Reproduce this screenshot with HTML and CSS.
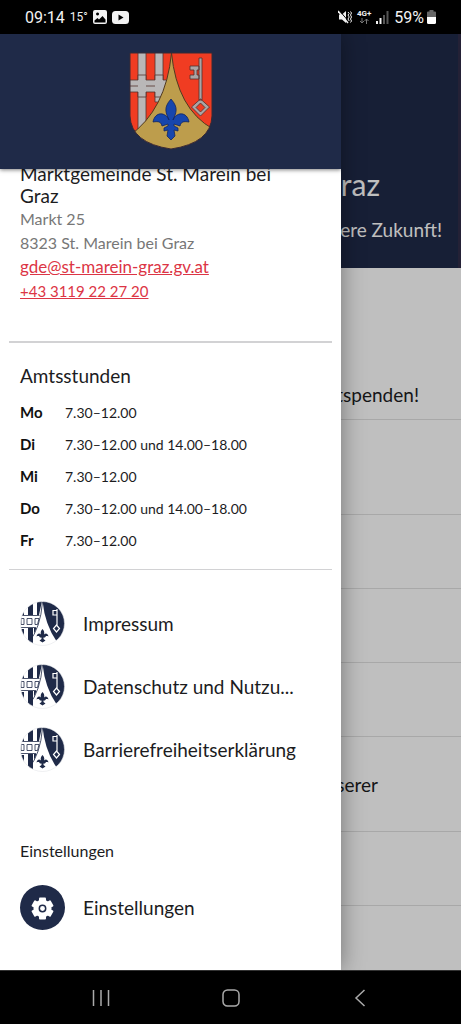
FILE: index.html
```html
<!DOCTYPE html>
<html lang="de">
<head>
    <meta charset="UTF-8">
    <meta name="viewport" content="width=device-width, initial-scale=1.0">
    <title>Marktgemeinde St. Marein bei Graz</title>
    <link rel="stylesheet" href="styles.css">
</head>
<body>
    <!-- Shared icon shapes -->
    <svg class="sprite" aria-hidden="true">
        <symbol id="crest-round" viewBox="0 0 45 45">
            <clipPath id="round"><circle cx="22.500" cy="22.500" r="22"/></clipPath>
            <g clip-path="url(#round)">
                <rect width="45" height="45" fill="#fff"/>
                <path d="M8 0h5v14H8zM17 0h5l-3 14h-2zM8 27h5v18H8zM0 28h4v17H0zM0 0h4v14H0z" fill="#1f2a48"/>
                <path d="M0 14.500h19.500M0 26.500h16M1 17.500h3v6H1zM7 17.500h5v6H7zM15 17.500h4l-1.500 6H15z" fill="none" stroke="#1f2a48" stroke-width=".8"/>
                <path d="M14 27h2.500Q14 34 9 41H8l6-8z" fill="#1f2a48"/>
                <path d="M22.500 0H45v30l-8 11Q25 24 22.500 0z" fill="#1f2a48"/>
                <path d="M22.500 1Q20.500 27 9 41" fill="none" stroke="#1f2a48" stroke-width=".8"/>
                <path d="M37 8v17M37 9.500h-4v4.500h4M36.500 24l3 3.500-3 3.500-3-3.500z" fill="none" stroke="#fff" stroke-width="1.200"/>
                <path d="M22.500 28c2.400 2.500 2 5 1 6.500 1-2.500 4-3 5 1-2-1-3-.3-3.500 1h-1.500v1.500l2 1.500-3 2-3-2 2-1.500v-1.500H20c-.500-1.300-1.500-2-3.500-1 1-4 4-3.500 5-1-1-1.500-1.400-4 1-6.500z" fill="#1f2a48"/>
            </g>
            <circle cx="22.500" cy="22.500" r="22" fill="none" stroke="#e4e5ea" stroke-width=".6"/>
        </symbol>
    </svg>

    <div class="screen">
        <div class="status-bar">
            <div class="status-left">
                <span class="clock">09:14</span>
                <span class="temp">15°</span>
                <svg width="14" height="14" viewBox="0 0 14 14"><path fill="#f2f2f2" fill-rule="evenodd" d="M2 0h10q2 0 2 2v10q0 2-2 2H2q-2 0-2-2V2q0-2 2-2zM1.500 10.500v2h11v-3L9.500 6 6 9.500 4.500 8zM4.500 2.500a1.500 1.500 0 1 0 .1 0z"/></svg>
                <svg width="17" height="13" viewBox="0 0 17 13"><rect width="17" height="13" rx="3.500" fill="#f2f2f2"/><path d="M6.500 3.500v6l5-3z" fill="#000"/></svg>
            </div>
            <div class="status-right">
                <svg width="14" height="14" viewBox="0 0 14 14"><path d="M1 4.500h3L8 1v12L4 9.500H1z" fill="#f2f2f2"/><path d="M1 0l10 12" stroke="#000"/><path d="M0 1l10 12" stroke="#f2f2f2" stroke-width="1.500"/><path d="M10 2l1.200 1.500L10 5l1.200 2L10 9l1.200 2M12.500 1.500L13.500 3l-1 2 1 2-1 2 1 2-1 1.500" stroke="#f2f2f2" fill="none"/></svg>
                <span class="network">4G+
                    <svg width="10" height="6" viewBox="0 0 10 6"><path d="M3 0v5M1 3l2 2 2-2M7.500 6V1M5.500 3l2-2 2 2" fill="none" stroke="#777"/></svg>
                </span>
                <svg width="13" height="13" viewBox="0 0 13 13"><path d="M0 10h2v3H0zM3.500 7h2v6h-2z" fill="#f2f2f2"/><path d="M7 4h2v9H7zM10.500 0h2v13h-2z" fill="#555"/></svg>
                <span class="percent">59%</span>
                <svg width="9" height="14" viewBox="0 0 9 14"><path d="M2.500 0h4v1.500H8q1 0 1 1V7H0V2.500q0-1 1-1h1.500z" fill="#666"/><path d="M0 7h9v5.500q0 1.500-1.500 1.500h-6Q0 14 0 12.500z" fill="#fff"/></svg>
            </div>
        </div>

        <div class="app">
            <main class="page">
                <header class="page-header">
                    <h1>Graz</h1>
                    <p>unsere Zukunft!</p>
                </header>
                <ul class="news">
                    <li class="news-first">Blutspenden!</li>
                    <li class="news-tall"></li>
                    <li></li>
                    <li></li>
                    <li></li>
                    <li class="news-tall news-short">unserer</li>
                    <li></li>
                    <li></li>
                </ul>
            </main>
            <div class="backdrop"></div>

            <aside class="drawer">
                <div class="drawer-header">
                    <svg class="crest" width="84" height="98" viewBox="0 0 84 98" role="img" aria-label="Wappen">
                        <clipPath id="shield"><path d="M1 1h82v63Q82 91 42 97 2 91 1 64z"/></clipPath>
                        <g clip-path="url(#shield)">
                            <rect width="84" height="98" fill="#f03c22"/>
                            <g fill="#b9b7b8" stroke="#53332f" stroke-width=".8">
                                <path d="M9 0h8v98H9zM26 0h8v50h-8z"/>
                                <path d="M0 28h9v-5h8v5h9v-5h8v5h6v12h-6v5h-8v-5h-9v5H9v-5H0z"/>
                                <path d="M0 34h9M17 34h9"/>
                            </g>
                            <path d="M42.500 1Q48 57 84 77v21H0V84Q37 58 42.500 1z" fill="#bd9d4c" stroke="#513a20"/>
                            <path d="M70 6h3v42h-3zM70 14h-9v4h4v5h-4v4h9v-4h-2v-5h2zM71.500 47l9 8-9 9-9-9zM71.500 51l-4.500 4.500 4.500 4.500 4.500-4.500z" fill="#aaa5a5" fill-rule="evenodd" stroke="#51302d" stroke-width=".8"/>
                            <path d="M42 47c-8 9-5 14-2 21-3-8-14-9-16 2 6-1 8 0 9 4l6-2v2l-4 2v3l4-1-1 6 4 4 4-4-1-6 4 1v-3l-4-2v-2l6 2c1-4 3-5 9-4-2-11-13-10-16-2 3-7 6-12-2-21z" fill="#1746ad" stroke="#14265e" stroke-width=".8"/>
                        </g>
                        <path d="M1 1h82v63Q82 91 42 97 2 91 1 64z" fill="none" stroke="#382b35"/>
                    </svg>
                </div>

                <div class="drawer-body">
                    <address class="contact">
                        <h2>Marktgemeinde St. Marein bei Graz</h2>
                        <p>Markt 25</p>
                        <p>8323 St. Marein bei Graz</p>
                        <p><a class="mail" href="mailto:gde@st-marein-graz.gv.at">gde@st-marein-graz.gv.at</a></p>
                        <p><a class="phone" href="tel:+433119222720">+43 3119 22 27 20</a></p>
                    </address>

                    <section class="hours">
                        <h2>Amtsstunden</h2>
                        <table>
                            <tr><th scope="row">Mo</th><td>7.30–12.00</td></tr>
                            <tr><th scope="row">Di</th><td>7.30–12.00 und 14.00–18.00</td></tr>
                            <tr><th scope="row">Mi</th><td>7.30–12.00</td></tr>
                            <tr><th scope="row">Do</th><td>7.30–12.00 und 14.00–18.00</td></tr>
                            <tr><th scope="row">Fr</th><td>7.30–12.00</td></tr>
                        </table>
                    </section>

                    <nav class="menu">
                        <a href="#impressum"><svg class="menu-icon"><use href="#crest-round"/></svg><span>Impressum</span></a>
                        <a href="#datenschutz"><svg class="menu-icon"><use href="#crest-round"/></svg><span>Datenschutz und Nutzu...</span></a>
                        <a href="#barrierefreiheit"><svg class="menu-icon"><use href="#crest-round"/></svg><span>Barrierefreiheitserklärung</span></a>
                    </nav>

                    <h3 class="menu-title">Einstellungen</h3>
                    <nav class="menu menu-settings">
                        <a href="#einstellungen">
                            <svg class="menu-icon" viewBox="0 0 45 45">
                                <circle cx="22.500" cy="22.500" r="22.500" fill="#1f2a48"/>
                                <g fill="#fff">
                                    <circle cx="22.500" cy="23.500" r="9"/>
                                    <rect x="19" y="12.500" width="7" height="22" rx="1"/>
                                    <rect x="19" y="12.500" width="7" height="22" rx="1" transform="rotate(60 22.500 23.500)"/>
                                    <rect x="19" y="12.500" width="7" height="22" rx="1" transform="rotate(120 22.500 23.500)"/>
                                </g>
                                <circle cx="22.500" cy="23.500" r="3.200" fill="#fff" stroke="#1f2a48" stroke-width="1.500"/>
                            </svg>
                            <span>Einstellungen</span>
                        </a>
                    </nav>
                </div>
            </aside>
        </div>

        <div class="nav-bar">
            <button type="button" aria-label="Letzte Apps"><svg width="18" height="18" viewBox="0 0 18 18"><path d="M1.500 1v16M9 1v16M16.500 1v16"/></svg></button>
            <button type="button" aria-label="Startseite"><svg width="18" height="18" viewBox="0 0 18 18"><rect x="1" y="1" width="16" height="16" rx="4.500"/></svg></button>
            <button type="button" aria-label="Zurück"><svg width="18" height="18" viewBox="0 0 18 18"><path d="M13.500 1L5 9l8.500 8"/></svg></button>
        </div>
    </div>
</body>
</html>
```

FILE: styles.css
```css
:root {
    --navy: #1f2a48;
    --red: #dc3545;
    --text: #1c1c1e;
    --muted: #777;
    --line: #d2d2d4;
}

* {
    box-sizing: border-box;
    margin: 0;
    padding: 0;
}

body {
    font-family: Lato, "Open Sans", sans-serif;
    color: var(--text);
    background: #000;
}

h1, h2, h3 {
    font-weight: 400;
}

.sprite {
    position: absolute;
    width: 0;
    height: 0;
}

.screen {
    display: flex;
    flex-direction: column;
    min-height: 100vh;
}

/* Status bar */
.status-bar {
    display: flex;
    justify-content: space-between;
    align-items: center;
    height: 34px;
    padding: 0 25px;
    color: #f2f2f2;
    font-family: Roboto, sans-serif;
}

.status-left,
.status-right {
    display: flex;
    align-items: center;
    gap: 5px;
}

.clock,
.percent {
    font-size: 16px;
}

.percent {
    margin-right: -2px;
}

.temp {
    font-size: 12px;
}

.network {
    display: flex;
    flex-direction: column;
    align-items: center;
    font-size: 8px;
    font-weight: 700;
    line-height: 8px;
}

/* Page behind the drawer */
.app {
    position: relative;
    flex: 1;
    overflow: hidden;
    background: #fff;
}

.page-header {
    height: 234px;
    padding: 134px 0 0;
    background: var(--navy);
    border-right: 3px solid #302c48;
    color: #fff;
    text-align: right;
}

.page-header h1 {
    padding-right: 78px;
    font-size: 30px;
    line-height: 32px;
}

.page-header p {
    margin-top: 18px;
    padding-right: 16px;
    font-size: 19px;
    line-height: 24px;
}

.news {
    list-style: none;
    font-size: 19px;
    text-align: right;
}

.news li {
    display: flex;
    align-items: center;
    justify-content: flex-end;
    height: 74px;
    padding-right: 42px;
    border-bottom: 1px solid #e0e0e0;
}

.news li:last-child {
    border-bottom: none;
    height: 64px;
}

.news li.news-first {
    align-items: flex-end;
    height: 152px;
    padding-bottom: 13px;
}

.news li.news-tall {
    height: 95px;
}

.news li.news-short {
    padding-right: 83px;
}

.backdrop {
    position: absolute;
    inset: 0;
    background: rgba(0, 0, 0, 0.25);
}

/* Drawer */
.drawer {
    position: absolute;
    top: 0;
    bottom: 0;
    left: 0;
    width: 74%;
    overflow: hidden;
    background: #fff;
    box-shadow: 0 0 22px rgba(0, 0, 0, 0.4);
}

.drawer-header {
    position: relative;
    display: flex;
    justify-content: center;
    height: 135px;
    padding-top: 18px;
    background: var(--navy);
    box-shadow: 0 1px 4px rgba(0, 0, 0, 0.5);
}

/* scrolled a little under the header */
.drawer-body {
    margin-top: -6px;
    padding: 0 9px;
}

.contact {
    padding: 0 11px 38px;
    border-bottom: 2px solid var(--line);
    color: var(--muted);
    font-size: 16px;
    font-style: normal;
    line-height: 24px;
}

.contact h2 {
    padding-right: 32px;
    color: var(--text);
    font-size: 19px;
    line-height: 22px;
}

.contact a {
    color: var(--red);
}

.contact .mail {
    font-size: 17px;
}

.contact .phone {
    font-size: 15px;
}

.hours {
    padding: 21px 11px 13px;
    border-bottom: 1px solid var(--line);
}

.hours h2 {
    margin-bottom: 8px;
    font-size: 19px;
    line-height: 24px;
}

.hours table {
    border-collapse: collapse;
    font-size: 14px;
}

.hours th {
    width: 45px;
    height: 32px;
    color: #111;
    font-size: 15px;
    font-weight: 700;
    text-align: left;
}

.menu {
    display: flex;
    flex-direction: column;
    gap: 18px;
    padding: 31px 11px 0;
}

.menu a {
    display: flex;
    align-items: center;
    gap: 18px;
    color: var(--text);
    font-size: 19px;
    text-decoration: none;
    white-space: nowrap;
}

.menu-icon {
    flex: none;
    width: 45px;
    height: 45px;
}

.menu-title {
    margin-top: 67px;
    padding: 0 11px;
    font-size: 16px;
    line-height: 24px;
}

.menu-settings {
    padding-top: 22px;
}

/* System navigation */
.nav-bar {
    display: flex;
    justify-content: center;
    gap: 47px;
    height: 54px;
    border-top: 1px solid #333;
}

.nav-bar button {
    display: flex;
    align-items: center;
    justify-content: center;
    width: 18%;
    border: none;
    background: none;
}

.nav-bar svg {
    fill: none;
    stroke: #aaa;
    stroke-width: 1.5;
}
```
